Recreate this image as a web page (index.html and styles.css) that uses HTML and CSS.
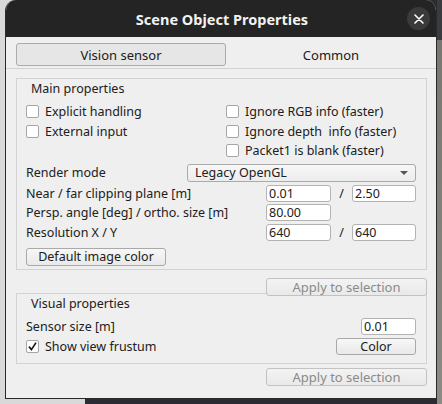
FILE: index.html
```html
<!DOCTYPE html>
<html>
<head>
<meta charset="utf-8">
<link rel="stylesheet" href="styles.css">
</head>
<body>
<div class="desk">
  <div class="window">
    <div class="titlebar">
      <span class="title">Scene Object Properties</span>
      <span class="close"><svg width="10" height="10" viewBox="0 0 10 10"><path d="M1 1L9 9M9 1L1 9" stroke="#fff" stroke-width="1.6" stroke-linecap="round"/></svg></span>
    </div>
    <div class="body">
      <div class="tabbar">
        <div class="tab active">Vision sensor</div>
        <div class="tab">Common</div>
      </div>
      <div class="pane">
        <div class="group main">
          <div class="gtitle">Main properties</div>
          <div class="checks">
            <label class="chk"><span class="box"></span>Explicit handling</label>
            <label class="chk"><span class="box"></span>Ignore RGB info (faster)</label>
            <label class="chk"><span class="box"></span>External input</label>
            <label class="chk"><span class="box"></span>Ignore depth&nbsp; info (faster)</label>
            <span></span>
            <label class="chk"><span class="box"></span>Packet1 is blank (faster)</label>
          </div>
          <div class="frow r-render">
            <span class="lbl">Render mode</span>
            <div class="combo"><span>Legacy OpenGL</span><span class="arrow"></span></div>
          </div>
          <div class="frow r-near">
            <span class="lbl">Near / far clipping plane [m]</span>
            <div class="pair"><span class="inp">0.01</span><span class="slash">/</span><span class="inp w2">2.50</span></div>
          </div>
          <div class="frow r-persp">
            <span class="lbl">Persp. angle [deg] / ortho. size [m]</span>
            <div class="pair"><span class="inp">80.00</span></div>
          </div>
          <div class="frow r-res">
            <span class="lbl">Resolution X / Y</span>
            <div class="pair"><span class="inp">640</span><span class="slash">/</span><span class="inp w2">640</span></div>
          </div>
          <div class="brow">
            <button class="btn defcol">Default image color</button>
          </div>
        </div>
        <div class="applyrow"><button class="btn apply">Apply to selection</button></div>
        <div class="group visual">
          <div class="gtitle">Visual properties</div>
          <div class="frow r-size">
            <span class="lbl">Sensor size [m]</span>
            <span class="inp small">0.01</span>
          </div>
          <div class="frow r-frust">
            <label class="chk"><span class="box checked"><svg width="11" height="11" viewBox="0 0 11 11"><path d="M2 5.6L4.4 8.6L9 1.6" fill="none" stroke="#1a1a1a" stroke-width="1.7"/></svg></span>Show view frustum</label>
            <button class="btn color">Color</button>
          </div>
        </div>
        <div class="applyrow second"><button class="btn apply">Apply to selection</button></div>
      </div>
    </div>
  </div>
</div>
</body>
</html>
```

FILE: styles.css
```css
* { box-sizing: border-box; }
html, body { margin: 0; padding: 0; }
body {
  width: 442px;
  height: 404px;
  overflow: hidden;
  background: linear-gradient(to right, #d9d9d9 0, #d9d9d9 85px, #2b2c33 85px, #2b2c33 100%);
  font-family: "Noto Sans", "DejaVu Sans", sans-serif;
  font-size: 12.5px;
  color: #202020;
}
.desk {
  height: 404px;
  padding-left: 5px;
  position: relative;
}
.desk::after {
  content: "";
  position: absolute;
  left: 437px; top: 0; width: 5px; height: 404px;
  background: linear-gradient(to bottom, #3a3b40 0, #3a3b40 40px, #7a7670 40px, #8d8a84 100%);
}
.window {
  width: 432px;
  height: 399px;
  background: #efefef;
  border-radius: 11px 11px 0 0;
  border-left: 1px solid #2a2a2a;
  border-right: 1px solid #2a2a2a;
  border-bottom: 1px solid #2a2a2a;
  overflow: hidden;
  display: flex;
  flex-direction: column;
}
.titlebar {
  height: 37px;
  flex: none;
  background: #242424;
  display: flex;
  align-items: center;
  justify-content: center;
  position: relative;
}
.title {
  color: #f2f2f2;
  font-weight: bold;
  font-size: 14.5px;
  margin-left: 2px;
}
.close {
  position: absolute;
  right: 6px;
  top: 7px;
  width: 23px;
  height: 23px;
  border-radius: 50%;
  background: #3a3a3a;
  display: flex;
  align-items: center;
  justify-content: center;
}
.body {
  flex: 1;
  display: flex;
  flex-direction: column;
}
.tabbar {
  display: flex;
  padding: 6px 0 0 10px;
  height: 32px;
  border-bottom: 1px solid #d2d2d2;
}
.tab {
  width: 210px;
  height: 23px;
  display: flex;
  align-items: center;
  justify-content: center;
  font-size: 13px;
}
.tab.active {
  background: #e6e6e6;
  border: 1px solid #ababab;
  border-radius: 3px;
}
.pane {
  padding: 9px 0 0 10px;
  display: flex;
  flex-direction: column;
}
.group {
  width: 411px;
  border: 1px solid #d3d3d3;
  padding: 0 10px 0 9px;
}
.gtitle {
  padding-left: 5px;
  height: 19px;
  line-height: 19px;
}
.checks {
  display: grid;
  grid-template-columns: 200px 1fr;
  grid-auto-rows: 19.5px;
  margin-top: 4px;
}
.chk {
  display: flex;
  align-items: center;
  gap: 6px;
}
.box {
  width: 13px;
  height: 13px;
  background: #fff;
  border: 1px solid #a6a6a6;
  border-radius: 2px;
  display: flex;
  align-items: center;
  justify-content: center;
  flex: none;
}
.frow {
  display: flex;
  align-items: center;
  justify-content: space-between;
}
.r-render { height: 20px; margin-top: 2px; }
.r-near { height: 19px; margin-top: 1px; }
.r-persp { height: 20px; }
.r-res { height: 20px; }
.combo {
  width: 229px;
  height: 18px;
  background: linear-gradient(#f7f7f7, #ececec);
  border: 1px solid #aaaaaa;
  border-radius: 3px;
  display: flex;
  align-items: center;
  justify-content: space-between;
  padding: 0 7px 0 7px;
}
.arrow {
  width: 0; height: 0;
  border-left: 4px solid transparent;
  border-right: 4px solid transparent;
  border-top: 4px solid #555;
}
.pair {
  width: 150px;
  display: flex;
  align-items: center;
}
.inp {
  width: 65px;
  height: 17px;
  background: #fff;
  border: 1px solid #b3b3b3;
  border-radius: 3px;
  display: flex;
  align-items: center;
  padding-left: 2px;
  font-size: 12.5px;
}
.inp.w2 { width: 64px; }
.slash {
  width: 21px;
  text-align: center;
}
.brow { height: 26px; display: flex; align-items: center; padding-top: 2px; }
.btn {
  font-family: inherit;
  font-size: 12.5px;
  color: #202020;
  background: linear-gradient(#f7f7f7, #e9e9e9);
  border: 1px solid #a9a9a9;
  border-radius: 3px;
  height: 18px;
  padding: 0;
  display: flex;
  align-items: center;
  justify-content: center;
}
.defcol { width: 140px; }
.applyrow {
  display: flex;
  justify-content: flex-end;
  width: 411px;
  margin-top: 8px;
  position: relative;
  z-index: 1;
}
.apply {
  width: 161px;
  font-size: 13px;
  color: #8a8a8a;
  border-color: #c2c2c2;
  background: linear-gradient(#f3f3f3, #e9e9e9);
}
.visual {
  margin-top: -3px;
  height: 71px;
}
.visual .gtitle { height: 20px; line-height: 20px; }
.r-size { height: 20px; margin-top: 3px; }
.inp.small { width: 55px; height: 17px; }
.r-frust { height: 19px; }
.color { width: 80px; height: 17px; }
.applyrow.second { margin-top: 4px; }
```
